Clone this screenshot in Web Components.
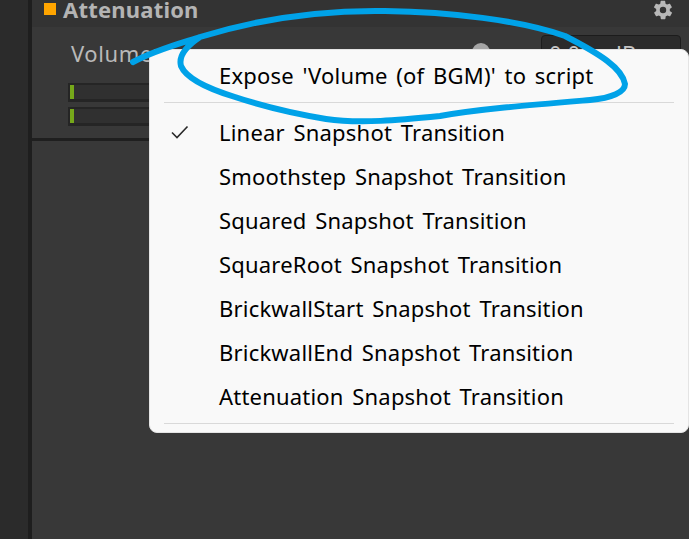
<!DOCTYPE html>
<html>
<head>
<meta charset="utf-8">
<style>
    html, body { margin: 0; height: 100%; overflow: hidden; }
    body { font-family: "Noto Sans", "Noto Sans CJK KR", sans-serif; }
    mixer-view { height: 539px; }
</style>
</head>
<body>
<mixer-view>
    <group-panel slot="panel" data-title="Attenuation" data-value="0.00 dB"></group-panel>
    <context-menu slot="menu">
        <menu-item>Expose 'Volume (of BGM)' to script</menu-item>
        <menu-line class="top"></menu-line>
        <menu-item checked>Linear Snapshot Transition</menu-item>
        <menu-item>Smoothstep Snapshot Transition</menu-item>
        <menu-item>Squared Snapshot Transition</menu-item>
        <menu-item>SquareRoot Snapshot Transition</menu-item>
        <menu-item>BrickwallStart Snapshot Transition</menu-item>
        <menu-item>BrickwallEnd Snapshot Transition</menu-item>
        <menu-item>Attenuation Snapshot Transition</menu-item>
        <menu-line></menu-line>
    </context-menu>
</mixer-view>
<script>
// page frame: side strip, panel column, then menu and pen stroke on top
customElements.define("mixer-view", class extends HTMLElement {
    constructor() {
        super();
        this.attachShadow({ mode: "open" }).innerHTML = /*html*/ `
        <style>
            :host { display: flex; position: relative; background: #383838; overflow: hidden; }
            .side { width: 28px; background: #2b2b2b; border-right: 4px solid #1e1e1e; flex: none; }
            .main { flex: 1; }
            ::slotted(context-menu) { position: absolute; left: 149px; top: 49px; }
            svg { position: absolute; left: 0; top: 0; pointer-events: none; }
        </style>
        <div class="side"></div>
        <div class="main"><slot name="panel"></slot></div>
        <slot name="menu"></slot>
        <svg width="689" height="539" fill="none" stroke="#00a2e8" stroke-width="6" stroke-linecap="round" stroke-linejoin="round">
            <path d="M133 62 C155 50 178 44 200 37 C188 45 178 55 181 66 C187 80 212 90 235 97 C262 106 290 113 326 119 C360 124 400 120 440 116 C480 109 530 105 590 100 C612 98 625 92 625 84 C622 68 600 54 565 36 C520 20 450 12 385 11 C320 10 255 20 200 37"/>
        </svg>`;
    }
});

customElements.define("group-panel", class extends HTMLElement {
    constructor() {
        super();
        this.attachShadow({ mode: "open" }).innerHTML = /*html*/ `
        <style>
            :host { display: block; color: #c4c4c4; height: 141px; box-sizing: border-box; border-bottom: 3px solid #1f1f1f; }
            header { height: 27px; background: #333; display: flex; align-items: center; padding: 0 15px 0 12px; gap: 7px; }
            .dot { width: 12px; height: 12px; background: #ffa500; flex: none; margin-bottom: 9px; }
            h1 { margin: 0 0 9px; font-size: 22px; font-weight: 700; letter-spacing: .2px; line-height: 22px; flex: 1; color: #b4b4b4; }
            .gear { margin-bottom: 8px; }
            .row { display: flex; padding: 8px 8px 0 39px; height: 40px; align-items: flex-start; }
            .label { font-size: 22px; letter-spacing: .6px; line-height: 36px; flex: 1; color: #b9b9b9; }
            .knob { width: 18px; height: 18px; border-radius: 50%; background: #a5a5a5; margin: 8px 51px 0 0; }
            .field { width: 140px; height: 40px; border: 1px solid #1c1c1c; border-radius: 4px; background: #2b2b2b; box-sizing: border-box; padding: 4px 7px; font-size: 22px; line-height: 26px; word-spacing: 10px; }
            .meters { padding: 8px 0 0 36px; display: grid; gap: 5px; justify-items: start; }
            .meter { width: 300px; height: 19px; box-sizing: border-box; background: #303030; border: 2px solid #252525; border-width: 2px 2px 3px; position: relative; }
            .meter::before { content: ""; position: absolute; left: 0; top: 0; bottom: 0; width: 4px; background: #76a81a; }
        </style>
        <header>
            <span class="dot"></span>
            <h1></h1>
            <svg class="gear" width="22" height="22" viewBox="0 0 24 24" fill="#b8b8b8">
                <path d="M19.4 13a7.5 7.5 0 0 0 0-2l2.1-1.6a.5.5 0 0 0 .1-.7l-2-3.4a.5.5 0 0 0-.6-.2l-2.5 1a7.4 7.4 0 0 0-1.7-1l-.4-2.7a.5.5 0 0 0-.5-.4h-4a.5.5 0 0 0-.5.4l-.4 2.7a7.4 7.4 0 0 0-1.7 1l-2.5-1a.5.5 0 0 0-.6.2l-2 3.4a.5.5 0 0 0 .1.7L4.6 11a7.5 7.5 0 0 0 0 2l-2.1 1.6a.5.5 0 0 0-.1.7l2 3.4c.1.2.4.3.6.2l2.5-1c.5.4 1.1.7 1.7 1l.4 2.7c0 .2.3.4.5.4h4c.2 0 .5-.2.5-.4l.4-2.7c.6-.3 1.2-.6 1.7-1l2.5 1c.2.1.5 0 .6-.2l2-3.4a.5.5 0 0 0-.1-.7zM12 15.5a3.5 3.5 0 1 1 0-7 3.5 3.5 0 0 1 0 7z"/>
            </svg>
        </header>
        <div class="row">
            <span class="label">Volume</span>
            <span class="knob"></span>
            <span class="field"></span>
        </div>
        <div class="meters">
            <div class="meter"></div>
            <div class="meter"></div>
        </div>`;
        this.shadowRoot.querySelector("h1").textContent = this.dataset["title"];
        this.shadowRoot.querySelector(".field").textContent = this.dataset["value"];
    }
});

customElements.define("context-menu", class extends HTMLElement {
    constructor() {
        super();
        this.attachShadow({ mode: "open" }).innerHTML = /*html*/ `
        <style>
            :host { display: block; width: 540px; height: 384px; box-sizing: border-box; background: #f9f9f9; border: 1px solid #e4e4e4; border-radius: 8px; padding: 3px 14px 0; }
        </style>
        <slot></slot>`;
    }
});

customElements.define("menu-item", class extends HTMLElement {
    constructor() {
        super();
        this.attachShadow({ mode: "open" }).innerHTML = /*html*/ `
        <style>
            :host { display: flex; align-items: center; height: 44px; color: #000; font-size: 22px; letter-spacing: .2px; word-spacing: 2.75px; }
            .check { width: 55px; flex: none; display: flex; padding-left: 7px; box-sizing: border-box; }
            svg { visibility: hidden; }
            :host([checked]) svg { visibility: visible; }
        </style>
        <span class="check">
            <svg width="18" height="14" viewBox="0 0 18 14" fill="none" stroke="#2a2a2a" stroke-width="1.6"><path d="M1 7.5 L6 12.5 L16.5 1.5"/></svg>
        </span>
        <span><slot></slot></span>`;
    }
});

customElements.define("menu-line", class extends HTMLElement {
    constructor() {
        super();
        this.attachShadow({ mode: "open" }).innerHTML = `<style>
            :host { display: block; height: 1px; background: #d9d9d9; margin: 5px 0 0; }
            :host(.top) { margin: 5px 0 7px; }
        </style>`;
    }
});
</script>
</body>
</html>
